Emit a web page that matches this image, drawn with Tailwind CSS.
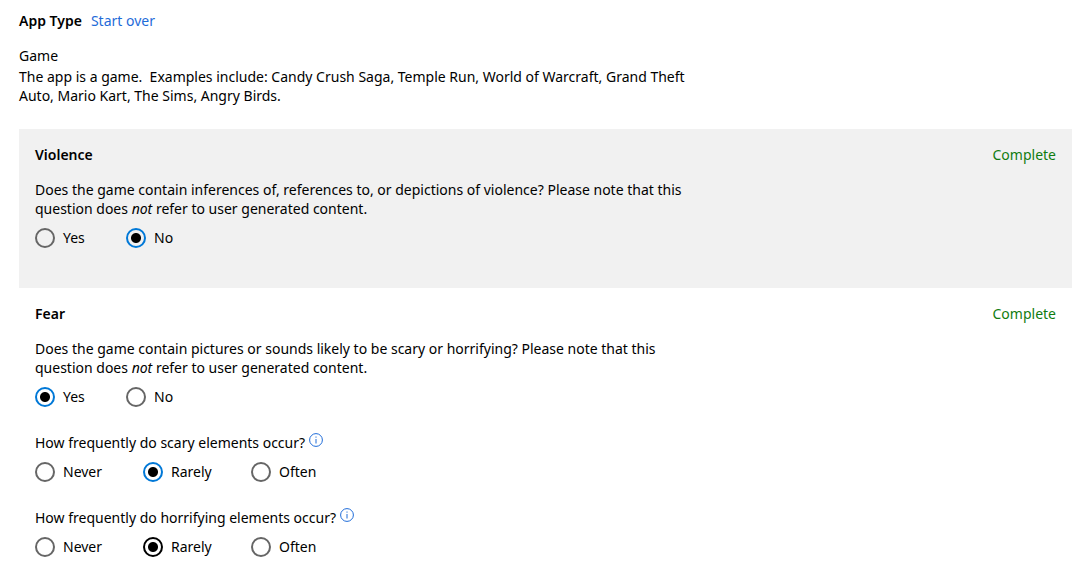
<!DOCTYPE html>
<html lang="en">
  <head>
    <meta charset="UTF-8" />
    <meta name="viewport" content="width=device-width, initial-scale=1.0" />
    <title>Age ratings</title>
    <script src="https://cdn.jsdelivr.net/npm/@tailwindcss/browser@4"></script>
  </head>
  <body class="bg-white text-black font-['Segoe_UI','Noto_Sans','Open_Sans',sans-serif] text-[14px] leading-[19px]">
    <main class="pt-[11px] pl-[19px] pr-[10px]">
      <header class="max-w-[690px]">
        <div class="flex gap-[9px] leading-5">
          <h1 class="font-semibold">App Type</h1>
          <a href="#" class="text-[#1f6cd9]">Start over</a>
        </div>
        <h2 class="mt-[15px] leading-5">Game</h2>
        <p class="mt-px">
          The app is a game.&nbsp; Examples include: Candy Crush Saga, Temple Run, World of Warcraft, Grand Theft
          Auto, Mario Kart, The Sims, Angry Birds.
        </p>
      </header>

      <section class="mt-6 bg-[#f1f1f1] px-4 pt-4 pb-10">
        <div class="flex justify-between leading-5">
          <h2 class="font-semibold">Violence</h2>
          <span class="text-[#107c10]">Complete</span>
        </div>
        <fieldset class="mt-[15px]">
          <legend class="max-w-[680px]">
            Does the game contain inferences of, references to, or depictions of violence? Please note that this
            question does <em>not</em> refer to user generated content.
          </legend>
          <div class="mt-[10px] flex leading-5">
            <label class="flex w-[91px] gap-2">
              <input type="radio" name="violence" class="size-5 shrink-0 appearance-none rounded-full border-2 border-[#666] checked:border-[#0078d7] checked:bg-[radial-gradient(circle,#000_4.5px,transparent_5.5px)]" />
              Yes
            </label>
            <label class="flex w-[91px] gap-2">
              <input type="radio" name="violence" checked class="size-5 shrink-0 appearance-none rounded-full border-2 border-[#666] checked:border-[#0078d7] checked:bg-[radial-gradient(circle,#000_4.5px,transparent_5.5px)]" />
              No
            </label>
          </div>
        </fieldset>
      </section>

      <section class="px-4 pt-4">
        <div class="flex justify-between leading-5">
          <h2 class="font-semibold">Fear</h2>
          <span class="text-[#107c10]">Complete</span>
        </div>
        <fieldset class="mt-[15px]">
          <legend class="max-w-[680px]">
            Does the game contain pictures or sounds likely to be scary or horrifying? Please note that this
            question does <em>not</em> refer to user generated content.
          </legend>
          <div class="mt-[10px] flex leading-5">
            <label class="flex w-[91px] gap-2">
              <input type="radio" name="fear" checked class="size-5 shrink-0 appearance-none rounded-full border-2 border-[#666] checked:border-[#0078d7] checked:bg-[radial-gradient(circle,#000_4.5px,transparent_5.5px)]" />
              Yes
            </label>
            <label class="flex w-[91px] gap-2">
              <input type="radio" name="fear" class="size-5 shrink-0 appearance-none rounded-full border-2 border-[#666] checked:border-[#0078d7] checked:bg-[radial-gradient(circle,#000_4.5px,transparent_5.5px)]" />
              No
            </label>
          </div>
        </fieldset>

        <fieldset class="mt-[26px]">
          <legend class="flex gap-1">
            How frequently do scary elements occur?
            <button type="button" aria-label="About scary elements" class="h-[14px] text-[#1f6cd9]">
              <svg class="size-[14px]" viewBox="0 0 14 14" fill="none" stroke="currentColor">
                <circle cx="7" cy="7" r="6.4" />
                <path d="M7 6v4.5M7 3.5v1.2" />
              </svg>
            </button>
          </legend>
          <div class="mt-[10px] flex leading-5">
            <label class="flex w-[108px] gap-2">
              <input type="radio" name="scary" class="size-5 shrink-0 appearance-none rounded-full border-2 border-[#666] checked:border-[#0078d7] checked:bg-[radial-gradient(circle,#000_4.5px,transparent_5.5px)]" />
              Never
            </label>
            <label class="flex w-[108px] gap-2">
              <input type="radio" name="scary" checked class="size-5 shrink-0 appearance-none rounded-full border-2 border-[#666] checked:border-[#0078d7] checked:bg-[radial-gradient(circle,#000_4.5px,transparent_5.5px)]" />
              Rarely
            </label>
            <label class="flex w-[108px] gap-2">
              <input type="radio" name="scary" class="size-5 shrink-0 appearance-none rounded-full border-2 border-[#666] checked:border-[#0078d7] checked:bg-[radial-gradient(circle,#000_4.5px,transparent_5.5px)]" />
              Often
            </label>
          </div>
        </fieldset>

        <fieldset class="mt-[26px]">
          <legend class="flex gap-1">
            How frequently do horrifying elements occur?
            <button type="button" aria-label="About horrifying elements" class="h-[14px] text-[#1f6cd9]">
              <svg class="size-[14px]" viewBox="0 0 14 14" fill="none" stroke="currentColor">
                <circle cx="7" cy="7" r="6.4" />
                <path d="M7 6v4.5M7 3.5v1.2" />
              </svg>
            </button>
          </legend>
          <div class="mt-[10px] flex leading-5">
            <label class="flex w-[108px] gap-2">
              <input type="radio" name="horrifying" class="size-5 shrink-0 appearance-none rounded-full border-2 border-[#666] checked:border-black checked:bg-[radial-gradient(circle,#000_4.5px,transparent_5.5px)]" />
              Never
            </label>
            <label class="flex w-[108px] gap-2">
              <input type="radio" name="horrifying" checked class="size-5 shrink-0 appearance-none rounded-full border-2 border-[#666] checked:border-black checked:bg-[radial-gradient(circle,#000_4.5px,transparent_5.5px)]" />
              Rarely
            </label>
            <label class="flex w-[108px] gap-2">
              <input type="radio" name="horrifying" class="size-5 shrink-0 appearance-none rounded-full border-2 border-[#666] checked:border-black checked:bg-[radial-gradient(circle,#000_4.5px,transparent_5.5px)]" />
              Often
            </label>
          </div>
        </fieldset>
      </section>
    </main>
  </body>
</html>
